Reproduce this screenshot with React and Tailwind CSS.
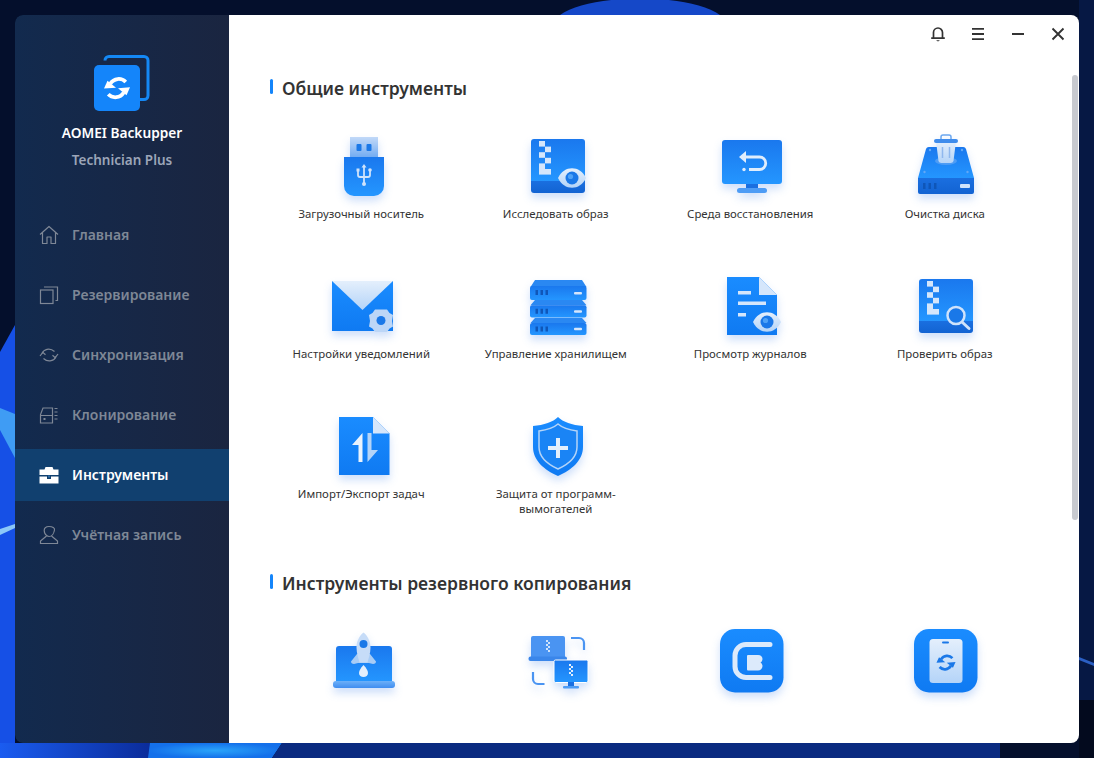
import React from "react";

const GENERAL = [
  { label: "Загрузочный носитель", icon: UsbIcon },
  { label: "Исследовать образ", icon: ExploreIcon },
  { label: "Среда восстановления", icon: RestoreIcon },
  { label: "Очистка диска", icon: CleanIcon },
  { label: "Настройки уведомлений", icon: MailIcon },
  { label: "Управление хранилищем", icon: StorageIcon },
  { label: "Просмотр журналов", icon: LogsIcon },
  { label: "Проверить образ", icon: CheckIcon },
  { label: "Импорт/Экспорт задач", icon: ImportIcon },
  { label: "Защита от программ-вымогателей", icon: ShieldIcon },
];

const BACKUP = [LaptopIcon, RemoteIcon, CbIcon, PhoneIcon];

const NAV = [
  { label: "Главная", icon: HomeNav },
  { label: "Резервирование", icon: BackupNav },
  { label: "Синхронизация", icon: SyncNav },
  { label: "Клонирование", icon: CloneNav },
  { label: "Инструменты", icon: ToolsNav, active: true },
  { label: "Учётная запись", icon: UserNav },
];

/* shared gradients, the icons below use screenshot coordinates in their viewBox */
function Defs() {
  return (
    <svg className="absolute w-0 h-0" aria-hidden="true">
      <defs>
        <linearGradient id="blue" x1="0" y1="0" x2="0" y2="1">
          <stop offset="0" stopColor="#1a78ee" />
          <stop offset="1" stopColor="#2496ff" />
        </linearGradient>
        <linearGradient id="blueDown" x1="0" y1="0" x2="0" y2="1">
          <stop offset="0" stopColor="#1a8cff" />
          <stop offset="1" stopColor="#0f7af2" />
        </linearGradient>
        <linearGradient id="band" x1="0" y1="0" x2="0" y2="1">
          <stop offset="0" stopColor="#1a6fe0" />
          <stop offset="1" stopColor="#1263d2" />
        </linearGradient>
        <linearGradient id="pale" x1="0" y1="0" x2="0" y2="1">
          <stop offset="0" stopColor="#e4effc" />
          <stop offset="1" stopColor="#b4d4f8" />
        </linearGradient>
        <linearGradient id="cap" x1="0" y1="0" x2="0" y2="1">
          <stop offset="0" stopColor="#c2d9f8" />
          <stop offset="1" stopColor="#6faaf2" />
        </linearGradient>
        <linearGradient id="base" x1="0" y1="0" x2="0" y2="1">
          <stop offset="0" stopColor="#6db0f8" />
          <stop offset="1" stopColor="#3f8df0" />
        </linearGradient>
      </defs>
    </svg>
  );
}

function Art({ box, children }) {
  return (
    <svg
      viewBox={`${box[0]} ${box[1]} 80 72`}
      className="w-20 h-[72px] shrink-0 overflow-visible drop-shadow-[0_5px_4px_rgba(30,110,230,0.22)]"
    >
      {children}
    </svg>
  );
}

function Zipper({ x, y, s = 1, fill = "#d5e6fb" }) {
  const w = 6 * s;
  const h = 5.6 * s;
  return (
    <g fill={fill}>
      <rect x={x} y={y} width={w} height={h} />
      <rect x={x + w} y={y + h} width={w} height={h} />
      <rect x={x} y={y + h * 2} width={w} height={h} />
      <rect x={x + w} y={y + h * 3} width={w} height={h} />
      <rect x={x} y={y + h * 4} width={w} height={h} />
      <rect x={x} y={y + h * 5} width={w * 2} height={h} />
    </g>
  );
}

function Eye({ cx, cy }) {
  return (
    <g>
      <path
        d={`M${cx - 14} ${cy}C${cx - 8} ${cy - 13} ${cx + 8} ${cy - 13} ${cx + 14} ${cy}C${cx + 8} ${cy + 13} ${cx - 8} ${cy + 13} ${cx - 14} ${cy}z`}
        fill="url(#pale)"
      />
      <circle cx={cx} cy={cy} r="6.5" fill="#1a78e8" />
      <circle cx={cx - 1.5} cy={cy - 1.5} r="2.6" fill="#4ea2f7" />
    </g>
  );
}

function Sync({ x, y, size, color }) {
  return (
    <g transform={`translate(${x} ${y}) scale(${size / 24})`}>
      <path d="M19 7.2C15.5 3.6 9.5 4 6.6 8.6" fill="none" stroke={color} strokeWidth="3" />
      <path d="M1.6 12.4l9.6-.6-6.8-5.6z" fill={color} />
      <path d="M5 17c3.5 3.6 9.5 3.2 12.4-1.4" fill="none" stroke={color} strokeWidth="3" />
      <path d="M22.4 11.4l-9.6.8 6.8 5.6z" fill={color} />
    </g>
  );
}

function UsbIcon() {
  return (
    <Art box={[321, 130]}>
      <rect x="350" y="137" width="28" height="21" fill="url(#cap)" />
      <rect x="356.5" y="144" width="5" height="7" rx="1" fill="#1a78e8" />
      <rect x="366.5" y="144" width="5" height="7" rx="1" fill="#1a78e8" />
      <path d="M344 157h40v29a10 10 0 0 1-10 10h-20a10 10 0 0 1-10-10z" fill="url(#blue)" />
      <path
        d="M364 167v16M358 171v4a2 2 0 0 0 2 2h8a2 2 0 0 0 2-2v-4"
        fill="none"
        stroke="#cfe3fb"
        strokeWidth="1.800"
      />
      <path d="M364 164l-2.500 3.500h5z" fill="#cfe3fb" />
      <rect x="356.500" y="168.500" width="3" height="3" fill="#cfe3fb" />
      <circle cx="370" cy="170" r="1.800" fill="#cfe3fb" />
      <circle cx="364" cy="184" r="2" fill="#cfe3fb" />
    </Art>
  );
}

function ExploreIcon() {
  return (
    <Art box={[516, 130]}>
      <path d="M534 139h48a3 3 0 0 1 3 3v39h-54v-39a3 3 0 0 1 3-3z" fill="url(#blue)" />
      <path d="M531 181h54v9a3 3 0 0 1-3 3h-48a3 3 0 0 1-3-3z" fill="url(#band)" />
      <Zipper x={539} y={141} />
      <Eye cx={572} cy={178} />
    </Art>
  );
}

function RestoreIcon() {
  return (
    <Art box={[710, 130]}>
      <rect x="722" y="140" width="60" height="44" rx="3" fill="url(#blue)" />
      <rect x="746" y="184" width="12" height="5" fill="#1a6fe0" />
      <rect x="737" y="188" width="30" height="5" rx="2.500" fill="#4d9cf5" />
      <path
        d="M744 157h15.500a6 6 0 0 1 0 12.500H749"
        fill="none"
        stroke="#e0edfc"
        strokeWidth="2.800"
      />
      <path d="M739 157l7-6v12z" fill="#e0edfc" />
      <circle cx="744" cy="169.500" r="1.700" fill="#e0edfc" />
    </Art>
  );
}

function CleanIcon() {
  return (
    <Art box={[905, 130]}>
      <path d="M929 147h34a3 3 0 0 1 3 2l8 29h-56l8-29a3 3 0 0 1 3-2z" fill="url(#blue)" />
      <path d="M918 178h56v14a2 2 0 0 1-2 2h-52a2 2 0 0 1-2-2z" fill="url(#band)" />
      <ellipse cx="946" cy="161" rx="11" ry="4" fill="#4d9cf5" />
      <path d="M936 141h20l-2.500 20a3 3 0 0 1-3 2h-9a3 3 0 0 1-3-2z" fill="url(#pale)" />
      <rect x="934" y="139" width="24" height="4" rx="2" fill="#3f8cec" />
      <path d="M941 139v-2a2 2 0 0 1 2-2h6a2 2 0 0 1 2 2v2" fill="none" stroke="#6ca8f0" strokeWidth="1.500" />
      <path d="M942.500 147v11M949.500 147v11" stroke="#8fb8ee" strokeWidth="1.500" />
      <g fill="#62a8f6">
        <circle cx="924.500" cy="172" r="1.200" />
        <circle cx="967.500" cy="172" r="1.200" />
        <circle cx="930" cy="150" r="1.200" />
        <circle cx="962" cy="150" r="1.200" />
      </g>
      <g fill="#0f56b8">
        <rect x="923" y="183" width="2.500" height="6" />
        <rect x="928.500" y="183" width="2.500" height="6" />
        <rect x="934" y="183" width="2.500" height="6" />
      </g>
      <rect x="960" y="184" width="10" height="4" rx="1" fill="#cfe3fb" />
    </Art>
  );
}

function MailIcon() {
  return (
    <Art box={[321, 270]}>
      <rect x="332" y="281" width="61" height="50" fill="url(#blueDown)" />
      <path d="M332 281h61l-30.500 29z" fill="url(#pale)" />
      <circle cx="381" cy="321" r="11" fill="#ffffff" />
      <path
        d="M375 309.500h12l2.500 3.500 3.500 2-1 6 1 5.500-3.500 2-2.500 3.500h-12l-2.500-3.500-3.500-2 1-5.500-1-6 3.500-2z"
        fill="#bcd6f7"
      />
      <circle cx="381" cy="320.500" r="4.500" fill="#1a78e8" />
    </Art>
  );
}

function StorageUnit({ y, h }) {
  const holes = [535.5, 540.5, 545.5];
  return (
    <g>
      <path d={`M535 ${y}h47l4.500 ${h * 0.3}h-56z`} fill="#2a88f2" />
      <rect x="530" y={y + h * 0.3} width="56.500" height={h * 0.7} rx="2" fill="url(#blue)" />
      {holes.map((x) => (
        <rect key={x} x={x} y={y + h * 0.5} width="2.500" height="5" fill="#0f56b8" />
      ))}
      <rect x="574" y={y + h * 0.58} width="8" height="2.500" rx="1" fill="#d5e6fb" />
    </g>
  );
}

function StorageIcon() {
  return (
    <Art box={[516, 270]}>
      <StorageUnit y={318} h={17} />
      <StorageUnit y={300} h={17.500} />
      <path d="M535 280h47l4.500 7h-56z" fill="#2a88f2" />
      <rect x="530" y="286" width="56.500" height="14" rx="2" fill="url(#blue)" />
      {[535.5, 540.5, 545.5].map((x) => (
        <rect key={x} x={x} y="290" width="2.500" height="5" fill="#0f56b8" />
      ))}
      <rect x="574" y="292" width="8" height="2.500" rx="1" fill="#d5e6fb" />
    </Art>
  );
}

function LogsIcon() {
  return (
    <Art box={[710, 270]}>
      <path d="M727 277h32l18 18v40h-50z" fill="url(#blueDown)" />
      <path d="M759 277l18 18h-18z" fill="#d5e6fb" />
      <g fill="#d5e6fb">
        <rect x="738" y="291" width="13" height="3.500" />
        <rect x="738" y="301.500" width="28" height="3.500" />
        <rect x="738" y="313" width="8" height="3.500" />
      </g>
      <Eye cx={767} cy={322} />
    </Art>
  );
}

function CheckIcon() {
  return (
    <Art box={[905, 270]}>
      <path d="M922 279h48a3 3 0 0 1 3 3v39h-54v-39a3 3 0 0 1 3-3z" fill="url(#blue)" />
      <path d="M919 321h54v9a3 3 0 0 1-3 3h-48a3 3 0 0 1-3-3z" fill="url(#band)" />
      <Zipper x={927} y={281} />
      <path d="M962 322l7 6.500" stroke="#cfe3fb" strokeWidth="3" strokeLinecap="round" />
      <circle cx="956" cy="315.500" r="8.500" fill="#1a78e8" stroke="#cfe3fb" strokeWidth="2.500" />
    </Art>
  );
}

function ImportIcon() {
  return (
    <Art box={[321, 410]}>
      <path d="M339 417h34l16.500 16.500V475H339z" fill="url(#blueDown)" />
      <path d="M373 417l16.500 16.500H373z" fill="#d5e6fb" />
      <path d="M362.500 433v29h-4v-17h-6.500z" fill="#eaf3fd" />
      <path d="M367.500 433h4v17h6.500l-10.500 12z" fill="#b4d4f8" />
    </Art>
  );
}

function ShieldIcon() {
  return (
    <Art box={[516, 410]}>
      <path
        d="M558 417c5 5 14 8 25 9v21c0 13-11 23-25 29-14-6-25-16-25-29v-21c11-1 20-4 25-9z"
        fill="url(#blueDown)"
      />
      <path
        d="M558 424c4 3.500 11 6 19 7v16c0 10-8 17-19 22-11-5-19-12-19-22v-16c8-1 15-3.500 19-7z"
        fill="#1a84f5"
        stroke="#b4d4f8"
        strokeWidth="1.500"
      />
      <path d="M558 438v20M548 448h20" stroke="#e4effc" strokeWidth="4" />
    </Art>
  );
}

function LaptopIcon() {
  return (
    <Art box={[321, 625]}>
      <path d="M339 646h50a3 3 0 0 1 3 3v33h-56v-33a3 3 0 0 1 3-3z" fill="url(#blue)" />
      <rect x="333" y="681" width="62" height="7" rx="3" fill="url(#base)" />
      <path d="M357 654l-6 7.500c0 1.500 1 2.500 3 2.500l4-1h11l4 1c2 0 3-1 3-2.500l-6-7.500z" fill="#a8ccf6" />
      <path d="M363.500 632.500c5 4 7 10 7 15 0 6-2 11-3 15h-8c-1-4-3-9-3-15 0-5 2-11 7-15z" fill="#c6dcf8" />
      <circle cx="363.500" cy="644" r="4" fill="#1a78e8" />
      <path d="M363.500 665c3 3 4.500 6 4.500 8 0 2.500-2 4-4.500 4s-4.500-1.500-4.500-4c0-2 1.500-5 4.500-8z" fill="#e4effc" />
    </Art>
  );
}

function SmallZip({ x, y, fill }) {
  return (
    <path
      d={`M${x} ${y}h2v2h-2zM${x + 2} ${y + 2}h2v2h-2zM${x} ${y + 4}h2v2h-2zM${x + 2} ${y + 6}h2v2h-2zM${x} ${y + 8}h2v2h-2zM${x + 2} ${y + 10}h2v2h-2z`}
      fill={fill}
    />
  );
}

function RemoteIcon() {
  return (
    <Art box={[516, 625]}>
      <path d="M533 636h30a2 2 0 0 1 2 2v19h-34v-19a2 2 0 0 1 2-2z" fill="#4a94f2" />
      <rect x="528.500" y="656.500" width="38.500" height="4.500" rx="2" fill="#3a86ea" />
      <SmallZip x={546} y={640} fill="#cfe3fb" />
      <rect x="554" y="660" width="34" height="22.500" rx="1.500" fill="url(#blue)" stroke="#ffffff" strokeWidth="1" />
      <rect x="568" y="682" width="6" height="4" fill="#1a6fe0" />
      <rect x="563" y="686" width="16" height="2.500" rx="1" fill="#4d9cf5" />
      <SmallZip x={569} y={664} fill="#e4effc" />
      <path d="M571 638h8a5 5 0 0 1 5 5v7" fill="none" stroke="#4a94f2" strokeWidth="2.200" />
      <path d="M533 672v7a5 5 0 0 0 5 5h6.500" fill="none" stroke="#4a94f2" strokeWidth="2.200" />
    </Art>
  );
}

function CbIcon() {
  return (
    <Art box={[710, 625]}>
      <rect x="720" y="629" width="63.500" height="63.500" rx="15" fill="url(#blueDown)" />
      <path
        d="M770 644.500h-24a11 11 0 0 0-11 11v11a11 11 0 0 0 11 11h24"
        fill="none"
        stroke="#dceafb"
        strokeWidth="5"
        strokeLinecap="round"
      />
      <path
        d="M747 656a1 1 0 0 1 1-1h10c3 0 4.500 2 4.500 4 0 1.500-1 3-2 3.500 1 .5 2 2 2 3.500 0 2.500-2 4.500-4.500 4.500h-10a1 1 0 0 1-1-1z"
        fill="#dceafb"
      />
    </Art>
  );
}

function PhoneIcon() {
  return (
    <Art box={[905, 625]}>
      <rect x="914" y="629" width="63.500" height="63.500" rx="15" fill="url(#blueDown)" />
      <rect x="929.500" y="639" width="33" height="44" rx="3.500" fill="url(#pale)" />
      <rect x="942" y="641.500" width="7" height="2" rx="1" fill="#1a78e8" />
      <Sync x={935} y={651.500} size={22} color="#1a78e8" />
    </Art>
  );
}

/* sidebar glyphs */
function NavSvg({ children }) {
  return (
    <svg viewBox="0 0 20 20" className="w-5 h-5 shrink-0" fill="none" stroke="currentColor" strokeWidth="1.200">
      {children}
    </svg>
  );
}

function HomeNav() {
  return (
    <NavSvg>
      <path d="M1 9.500 10 1.500l9 8M3.500 7.500V18.500h4.500v-6.500h4v6.500h4.500V7.500" strokeLinejoin="round" />
    </NavSvg>
  );
}

function BackupNav() {
  return (
    <NavSvg>
      <rect x="1.500" y="5" width="12.500" height="13.500" />
      <path d="M5 2h13.500v13.500h-2" />
    </NavSvg>
  );
}

function SyncNav() {
  return (
    <NavSvg>
      <path d="M3 8.500C4.500 4.500 10.500 2 15.500 6.500" />
      <path d="M17 11.500C15.500 15.500 9.500 18 4.500 13.500" />
      <path d="M1 11 3.800 7.300 6.500 9.800M19 9l-2.800 3.700-2.700-2.500" />
    </NavSvg>
  );
}

function CloneNav() {
  return (
    <NavSvg>
      <path d="M4 3h9.500v15H1.500V9.500L4 3zM1.500 10.500h12" />
      <rect x="4.500" y="13" width="2" height="2" fill="currentColor" stroke="none" />
      <path d="M15.500 3.500h3M15.500 7h3M15.500 10.500h3M15.500 14h3" />
    </NavSvg>
  );
}

function ToolsNav() {
  return (
    <svg viewBox="0 0 20 20" className="w-5 h-5 shrink-0" fill="currentColor">
      <path d="M6.500 2h7l1 2.500H19.500V10h-19V4.500h5z" />
      <path d="M.5 11.500h7.500v2.500h4v-2.500h7.500V18.500H.5z" />
      <rect x="9" y="10.500" width="2" height="2" fill="#2f6ea8" />
    </svg>
  );
}

function UserNav() {
  return (
    <NavSvg>
      <path d="M10 1.500c3.500 0 6 1.500 5.500 3.500-.5 3-2.500 6.500-5.500 6.500S5.200 8 5.200 5.500C5.200 3 7 1.500 10 1.500z" />
      <path d="M7.500 11 1.500 16v2.500h17V16l-6-5" />
    </NavSvg>
  );
}

function Sidebar() {
  return (
    <aside className="w-[214px] shrink-0 flex flex-col bg-gradient-to-r from-[#122a4e] to-[#1a2540] rounded-l-lg">
      <div className="h-[194px] flex flex-col items-center pt-10">
        <svg viewBox="0 0 56 56" className="w-14 h-14 ml-[-1px]">
          <path d="M11 5.500a4 4 0 0 1 4-4h35a4 4 0 0 1 4 4v35a4 4 0 0 1-4 4h-4" fill="none" stroke="#1488f5" strokeWidth="3" />
          <rect x="0" y="10" width="46" height="46" rx="5" fill="#1485fa" />
          <Sync x={8} y={18} size={30} color="#ffffff" />
        </svg>
        <div className="mt-[13px] text-[13.700px] leading-[18px] font-semibold text-white">AOMEI Backupper</div>
        <div className="mt-[9px] text-[13.500px] leading-[18px] font-semibold text-[#9ba5b8]">Technician Plus</div>
      </div>
      <nav className="flex flex-col gap-2">
        {NAV.map(({ label, icon: Icon, active }) => (
          <div
            key={label}
            className={
              active
                ? "h-[52px] flex items-center gap-[13px] pl-6 text-[14px] font-semibold text-white bg-[#11406f]"
                : "h-[52px] flex items-center gap-[13px] pl-6 text-[14px] font-semibold text-[#7e8796]"
            }
          >
            <Icon />
            <span className="mb-[2px]">{label}</span>
          </div>
        ))}
      </nav>
    </aside>
  );
}

function TitleBar() {
  return (
    <div className="h-[54px] shrink-0 flex justify-end items-start pt-[3px] pr-px text-[#333333]">
      <button className="w-10 h-8 flex items-center justify-center">
        <svg viewBox="0 0 16 16" className="w-4 h-4" fill="none" stroke="currentColor" strokeWidth="1.700">
          <path d="M3.500 12V6.500a4.500 4.500 0 0 1 9 0V12M1.200 12.200h13.600" />
          <path d="M6 14.300h4l-2 1.200z" fill="currentColor" stroke="none" />
        </svg>
      </button>
      <button className="w-10 h-8 flex items-center justify-center">
        <svg viewBox="0 0 16 16" className="w-4 h-4" stroke="currentColor" strokeWidth="1.800">
          <path d="M2 2.800h12M2 8h12M2 13.200h12" />
        </svg>
      </button>
      <button className="w-10 h-8 flex items-center justify-center">
        <svg viewBox="0 0 16 16" className="w-4 h-4" stroke="currentColor" strokeWidth="1.800">
          <path d="M2 8h12" />
        </svg>
      </button>
      <button className="w-10 h-8 flex items-center justify-center">
        <svg viewBox="0 0 16 16" className="w-4 h-4" stroke="currentColor" strokeWidth="1.900">
          <path d="M2.500 2.500l11 11M13.500 2.500l-11 11" />
        </svg>
      </button>
    </div>
  );
}

function SectionTitle({ children }) {
  return (
    <div className="h-[38px] shrink-0 flex items-center gap-[9px] ml-[41px]">
      <span className="w-[3px] h-[15px] rounded-sm bg-[#1485fa] mb-[3px]" />
      <h2 className="text-[17.500px] font-semibold text-[#333333]">{children}</h2>
    </div>
  );
}

function Tile({ label, icon: Icon }) {
  return (
    <div className="h-[140px] flex flex-col items-center">
      <Icon />
      {label && (
        <div className="mt-1 w-[150px] text-center text-[11.400px] leading-[15px] text-[#333333]">{label}</div>
      )}
    </div>
  );
}

export default function App() {
  return (
    <div className="relative w-[1094px] h-[758px] overflow-hidden p-[15px] bg-[#040f2c] font-['Noto_Sans',sans-serif]">
      <Defs />
      {/* wallpaper */}
      <svg viewBox="0 0 1094 758" className="absolute inset-0 w-full h-full">
        <defs>
          <linearGradient id="wallLeft" x1="0" y1="0" x2="1" y2="0">
            <stop offset="0" stopColor="#1a5cf0" />
            <stop offset="1" stopColor="#0b2c9a" />
          </linearGradient>
          <radialGradient id="wallBloom" cx="0.5" cy="0.5" r="0.5">
            <stop offset="0" stopColor="#2aa4fa" />
            <stop offset="1" stopColor="#1470ea" />
          </radialGradient>
        </defs>
        <rect width="1094" height="758" fill="#040f2c" />
        <rect x="1079" width="15" height="758" fill="#061844" />
        <rect x="1079" y="700" width="15" height="58" fill="#030a1e" />
        <path d="M0 352 15 325V758H0z" fill="#1650e6" />
        <path d="M0 408 15 414V458L0 430z" fill="#3f9cf4" />
        <path d="M0 529 15 524V528L0 535z" fill="#8cc8f8" />
        <path d="M0 743H150V758H0z" fill="url(#wallLeft)" />
        <path d="M150 743H282L272 758H148z" fill="url(#wallBloom)" />
        <path d="M282 743H1000V758H272z" fill="#0a2a80" />
        <path d="M560 15c30-22 130-22 160 0z" fill="#1548c8" />
        <path d="M1079 657l15 6v3l-15-6z" fill="#2b5fc4" />
      </svg>
      {/* window */}
      <div className="relative flex h-[728px] w-[1064px] rounded-lg overflow-hidden">
        <Sidebar />
        <main className="relative flex-1 flex flex-col bg-white overflow-hidden">
          <TitleBar />
          <SectionTitle>Общие инструменты</SectionTitle>
          <div className="mt-[23px] ml-[35px] w-[778px] shrink-0 grid grid-cols-4">
            {GENERAL.map((t) => (
              <Tile key={t.label} {...t} />
            ))}
          </div>
          <div className="mt-[14px] shrink-0">
            <SectionTitle>Инструменты резервного копирования</SectionTitle>
          </div>
          <div className="mt-[23px] ml-[35px] w-[778px] shrink-0 grid grid-cols-4">
            {BACKUP.map((Icon, i) => (
              <Tile key={i} icon={Icon} />
            ))}
          </div>
          {/* scrollbar */}
          <div className="absolute right-px top-[60px] w-[6px] h-[445px] rounded bg-[#c8cad0]" />
        </main>
      </div>
    </div>
  );
}
